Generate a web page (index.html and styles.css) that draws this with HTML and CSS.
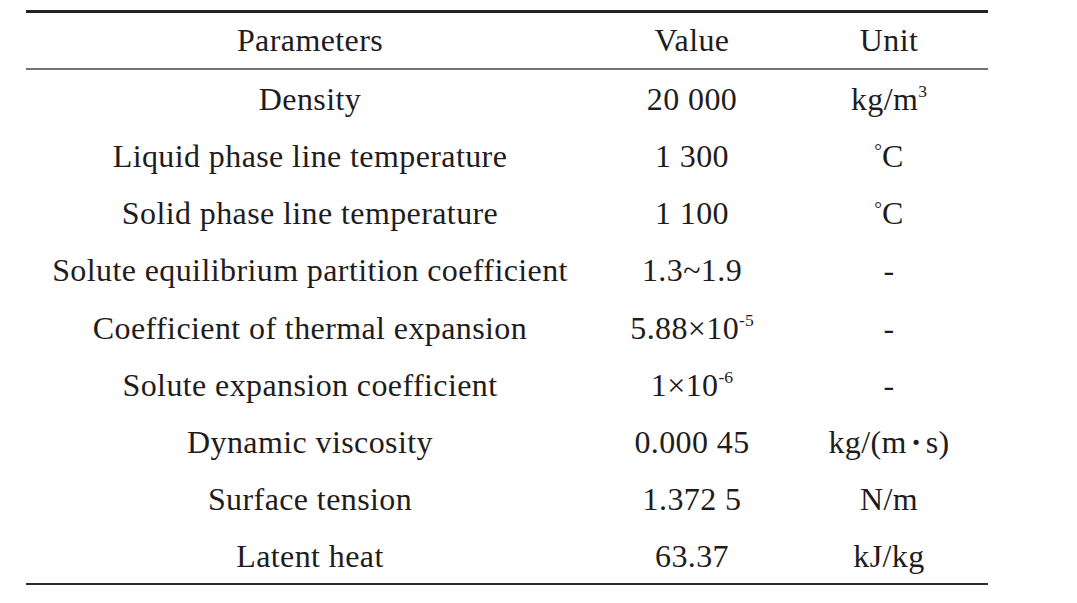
FILE: index.html
```html
<!DOCTYPE html>
<html>
<head>
<meta charset="utf-8">
<link rel="stylesheet" href="styles.css">
</head>
<body>
<table class="params">
  <thead>
    <tr><th class="c1">Parameters</th><th class="c2">Value</th><th class="c3">Unit</th></tr>
  </thead>
  <tbody>
    <tr><td>Density</td><td>20 000</td><td>kg/m<sup>3</sup></td></tr>
    <tr><td>Liquid phase line temperature</td><td>1 300</td><td><span class="deg">°</span>C</td></tr>
    <tr><td>Solid phase line temperature</td><td>1 100</td><td><span class="deg">°</span>C</td></tr>
    <tr><td>Solute equilibrium partition coefficient</td><td>1.3~1.9</td><td>-</td></tr>
    <tr><td>Coefficient of thermal expansion</td><td>5.88×10<sup>-5</sup></td><td>-</td></tr>
    <tr><td>Solute expansion coefficient</td><td>1×10<sup>-6</sup></td><td>-</td></tr>
    <tr><td>Dynamic viscosity</td><td>0.000 45</td><td>kg/(m<span class="dot">·</span>s)</td></tr>
    <tr><td>Surface tension</td><td>1.372 5</td><td>N/m</td></tr>
    <tr><td>Latent heat</td><td>63.37</td><td>kJ/kg</td></tr>
  </tbody>
</table>
</body>
</html>
```

FILE: styles.css
```css
html, body {
  margin: 0;
  padding: 0;
  background: #ffffff;
}

body {
  font-family: "Liberation Serif", "Times New Roman", serif;
  color: #1f1c1d;
}

.params {
  margin: 10px 0 0 26px;
  width: 962px;
  border-collapse: collapse;
  table-layout: fixed;
  border-top: 3px solid #222222;
  border-bottom: 2px solid #2a2a2a;
  font-size: 32px;
  letter-spacing: 0.4px;
}

.params th,
.params td {
  padding: 0;
  text-align: center;
  font-weight: normal;
  white-space: nowrap;
  line-height: 1;
}

.params thead tr {
  height: 57px;
}

.params thead th {
  border-bottom: 2px solid #737373;
  padding-bottom: 1px;
}

.params tbody tr {
  height: 57.25px;
}

.params tbody td {
  padding-top: 3px;
}

.c1 { width: 568px; }
.c2 { width: 196px; }
.c3 { width: 198px; }

sup {
  font-size: 0.55em;
  line-height: 0;
  vertical-align: 0.75em;
  letter-spacing: 0;
}

.deg {
  font-size: 0.6em;
  vertical-align: 0.5em;
  margin-right: -0.03em;
}

.dot {
  padding: 0 0.12em;
  font-weight: bold;
}
```
